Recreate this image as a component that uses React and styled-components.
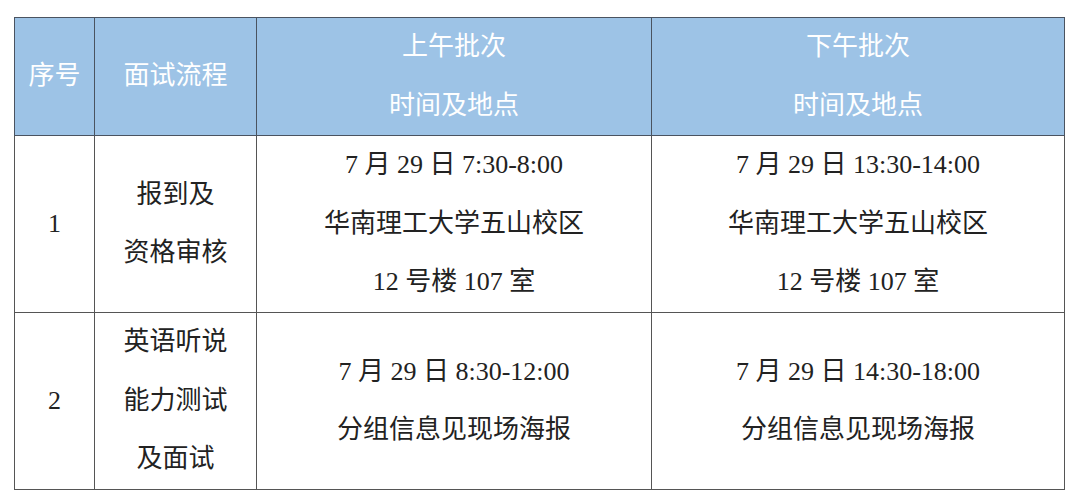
import React from "react";
import styled, { createGlobalStyle } from "styled-components";

const GlobalStyle = createGlobalStyle`
  body {
    margin: 0;
    background: #ffffff;
    font-family: "Liberation Serif", "Noto Sans CJK SC", serif;
  }
`;

const Page = styled.div`
  width: 1080px;
  height: 503px;
  padding: 17px 0 0 14px;
  box-sizing: border-box;
  background: #ffffff;
`;

const Table = styled.table`
  width: 1050px;
  table-layout: fixed;
  border-collapse: collapse;
  font-family: "Liberation Serif", "Noto Sans CJK SC", serif;
  font-size: 26px;
  line-height: 58.5px;
  color: #222222;
`;

const HeadRow = styled.tr`
  height: 117px;
  background: #9dc3e6;
`;

const BodyRow = styled.tr`
  height: 177px;
`;

const HeadCell = styled.th`
  border: 1px solid #4a5360;
  color: #ffffff;
  font-weight: 400;
  text-align: center;
  vertical-align: middle;
  padding: 0;
`;

const Cell = styled.td`
  border: 1px solid #555555;
  text-align: center;
  vertical-align: middle;
  padding: 0;
`;

const Line = styled.div`
  white-space: nowrap;
`;

const columns = [80, 162, 395, 413];

const rows = [
  {
    no: "1",
    step: ["报到及", "资格审核"],
    am: ["7 月 29 日 7:30-8:00", "华南理工大学五山校区", "12 号楼 107 室"],
    pm: ["7 月 29 日 13:30-14:00", "华南理工大学五山校区", "12 号楼 107 室"],
  },
  {
    no: "2",
    step: ["英语听说", "能力测试", "及面试"],
    am: ["7 月 29 日 8:30-12:00", "分组信息见现场海报"],
    pm: ["7 月 29 日 14:30-18:00", "分组信息见现场海报"],
  },
];

const Lines = ({ items }) =>
  items.map((text, i) => <Line key={i}>{text}</Line>);

export default function App() {
  return (
    <>
      <GlobalStyle />
      <Page>
        <Table>
          <colgroup>
            {columns.map((w, i) => (
              <col key={i} style={{ width: w }} />
            ))}
          </colgroup>
          <thead>
            <HeadRow>
              <HeadCell>序号</HeadCell>
              <HeadCell>面试流程</HeadCell>
              <HeadCell>
                <Lines items={["上午批次", "时间及地点"]} />
              </HeadCell>
              <HeadCell>
                <Lines items={["下午批次", "时间及地点"]} />
              </HeadCell>
            </HeadRow>
          </thead>
          <tbody>
            {rows.map((row) => (
              <BodyRow key={row.no}>
                <Cell>{row.no}</Cell>
                <Cell>
                  <Lines items={row.step} />
                </Cell>
                <Cell>
                  <Lines items={row.am} />
                </Cell>
                <Cell>
                  <Lines items={row.pm} />
                </Cell>
              </BodyRow>
            ))}
          </tbody>
        </Table>
      </Page>
    </>
  );
}
